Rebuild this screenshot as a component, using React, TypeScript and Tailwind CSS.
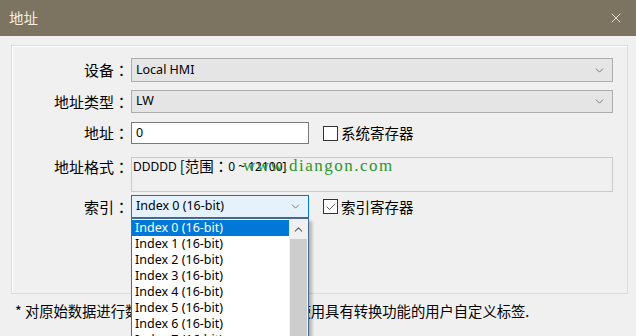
import { ChevronDown, ChevronUp, X, Check } from 'lucide-react';

const ui = { fontFamily: '"Segoe UI", "Noto Sans", "Noto Sans CJK SC", sans-serif' };
const zh = { fontFamily: '"Noto Sans CJK SC", sans-serif' };
// 全角冒号居中
const zhColon = { fontFamily: '"Noto Sans CJK TC", "Noto Sans CJK SC", sans-serif' };

function Combo({ value, width, focused }: { value: string; width: string; focused?: boolean }) {
  return (
    <div
      className={`flex items-center justify-between h-full pl-[4px] pr-[6px] border ${width} ${
        focused ? 'bg-[#e5f1fb] border-[#0078d7]' : 'bg-[#e5e5e5] border-[#adadad]'
      }`}
    >
      <span className="text-[12.5px] text-black leading-none">{value}</span>
      <ChevronDown className="w-[13px] h-[13px] text-[#5a5a5a]" strokeWidth={1.4} />
    </div>
  );
}

function Label({ text }: { text: string }) {
  return (
    <div className="w-[119px] shrink-0 text-right text-[15px] text-black pr-[2px] leading-[20px]" style={zhColon}>
      {text}
    </div>
  );
}

function CheckBox({ label, checked }: { label: string; checked?: boolean }) {
  return (
    <div className="flex items-center ml-[14px] gap-[3px]">
      <div className="w-[15px] h-[15px] border border-[#333] bg-white flex items-center justify-center">
        {checked && <Check className="w-[12px] h-[12px] text-[#333]" strokeWidth={1.6} />}
      </div>
      <span className="text-[14.5px] text-black" style={zh}>
        {label}
      </span>
    </div>
  );
}

const items = [0, 1, 2, 3, 4, 5, 6, 7, 8];

export default function App() {
  return (
    <div className="w-[636px] h-[336px] bg-[#f0f0f0] overflow-hidden relative" style={ui}>
      {/* 标题栏 */}
      <div className="h-[36px] bg-[#7c7360] flex items-center justify-between pl-[9px] pr-[12px]">
        <span className="text-[14.5px] text-[#f3efe4]" style={zh}>
          地址
        </span>
        <X className="w-[16px] h-[16px] text-[#f3efe4]" strokeWidth={1.3} />
      </div>

      {/* 分组框 */}
      <div className="ml-[11px] mt-[9px] w-[617px] h-[249px] border border-[#dcdcdc] shadow-[inset_1px_1px_0_#fff] pt-[12px]">
        <div className="flex items-center h-[24px]">
          <Label text="设备：" />
          <Combo value="Local HMI" width="w-[482px]" />
        </div>
        <div className="flex items-center h-[23px] mt-[8px]">
          <Label text="地址类型：" />
          <Combo value="LW" width="w-[482px]" />
        </div>
        <div className="flex items-center h-[22px] mt-[9px]">
          <Label text="地址：" />
          <div className="w-[178px] h-full bg-white border border-[#7a7a7a] flex items-center pl-[4px] text-[12.5px]">0</div>
          <CheckBox label="系统寄存器" />
        </div>
        <div className="flex items-start h-[35px] mt-[13px]">
          <Label text="地址格式：" />
          <div className="relative w-[482px] h-full border border-[#c8c8c8] bg-[#f0f0f0] pl-[1px] flex items-start">
            <span className="text-[12px] leading-[16px] mt-[1px]">DDDDD</span>
            <span className="text-[14.5px] leading-[16px] ml-[3px]" style={zhColon}>
              [范围：
            </span>
            <span className="text-[12px] leading-[16px] mt-[1px]">0 ~ 12100]</span>
            <span
              className="absolute left-[111px] top-[-5px] text-[17px] text-[#2c962c] tracking-[1.5px]"
              style={{ fontFamily: '"Liberation Serif", serif' }}
            >
              www.diangon.com
            </span>
          </div>
        </div>
        <div className="flex items-center h-[23px] mt-[3px]">
          <Label text="索引：" />
          <div className="relative h-full">
            <Combo value="Index 0 (16-bit)" width="w-[178px]" focused />
            {/* 下拉列表 */}
            <div className="absolute left-0 top-[23px] w-[178px] h-[130px] bg-white border border-[#4d6b8f] shadow-[3px_3px_3px_rgba(0,0,0,0.25)] flex z-10">
              <div className="flex-1 pt-[1px]">
                {items.map((i) => (
                  <div
                    key={i}
                    className={`h-[16px] leading-[16px] pl-[3px] text-[12.5px] ${
                      i === 0 ? 'bg-[#0078d7] text-white' : 'text-black'
                    }`}
                  >
                    Index {i} (16-bit)
                  </div>
                ))}
              </div>
              <div className="w-[19px] bg-[#f0f0f0] flex flex-col items-center">
                <div className="h-[20px] flex items-center justify-center">
                  <ChevronUp className="w-[13px] h-[13px] text-[#606060]" strokeWidth={2} />
                </div>
                <div className="w-[17px] flex-1 bg-[#cdcdcd]" />
              </div>
            </div>
          </div>
          <CheckBox label="索引寄存器" checked />
        </div>
      </div>

      {/* 说明 */}
      <div className="mt-[6px] pl-[15px] text-[14.3px] text-black whitespace-nowrap" style={zh}>
        * 对原始数据进行数值转换或缩放处理时，请使用具有转换功能的用户自定义标签.
      </div>
    </div>
  );
}
